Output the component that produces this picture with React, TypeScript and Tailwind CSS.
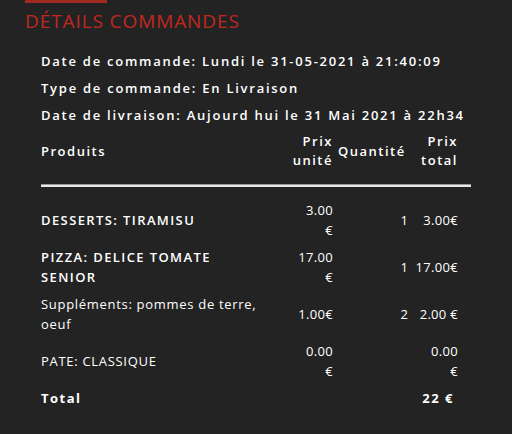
const rows = [
  { name: "DESSERTS: TIRAMISU", strong: true, unit: ["3.00", "€"], qty: "1", total: ["3.00€"] },
  { name: "PIZZA: DELICE TOMATE SENIOR", strong: true, unit: ["17.00", "€"], qty: "1", total: ["17.00€"] },
  { name: "Suppléments: pommes de terre, oeuf", strong: false, unit: ["1.00€"], qty: "2", total: ["2.00 €"] },
  { name: "PATE: CLASSIQUE", strong: false, unit: ["0.00", "€"], qty: "", total: ["0.00", "€"] },
];

export default function App() {
  return (
    <div
      className="h-[434px] w-[512px] overflow-hidden bg-[#232323] text-white"
      style={{ fontFamily: '"Open Sans", "Noto Sans", sans-serif' }}
    >
      <div className="ml-[25px] h-[3px] w-[82px] bg-[#9e2a22]" />
      <h1 className="ml-[25px] mt-[8px] text-[19px] font-medium leading-[20px] tracking-[0.9px] text-[#c0281f]">
        DÉTAILS COMMANDES
      </h1>
      <div className="mt-[20px] flex flex-col gap-[7px] pl-[41px] text-[13px] font-semibold leading-[20px] tracking-[1.75px]">
        <div>Date de commande: Lundi le 31-05-2021 à 21:40:09</div>
        <div>Type de commande: En Livraison</div>
        <div>Date de livraison: Aujourd hui le 31 Mai 2021 à 22h34</div>
      </div>
      <div className="ml-[41px] mt-[7px] w-[430px]">
        <div className="grid grid-cols-[250px_42px_79px_46px] text-[13px] font-semibold leading-[19px] tracking-[1.5px]">
          <div className="self-center">Produits</div>
          <div className="text-right">
            Prix
            <br />
            unité
          </div>
          <div className="self-center pl-[5px]">Quantité</div>
          <div className="text-right">
            Prix
            <br />
            total
          </div>
        </div>
        <div className="mt-[14px] h-[3px] border-t border-[#9a9a9a] bg-[#e8e8e8]" />
        <div className="mt-[13px] flex flex-col gap-[7px] text-[13px] leading-[20px]">
          {rows.map((r) => (
            <div key={r.name} className="grid h-[40px] grid-cols-[250px_42px_79px_46px] items-center">
              <div className={r.strong ? "pr-[40px] font-semibold tracking-[1.4px]" : "pr-[20px] tracking-[0.7px]"}>
                {r.name}
              </div>
              <div className="text-right tracking-[0.3px]">
                {r.unit.map((u) => (
                  <div key={u}>{u}</div>
                ))}
              </div>
              <div className="pr-[4px] text-right">{r.qty}</div>
              <div className="text-right tracking-[0.3px]">
                {r.total.map((t) => (
                  <div key={t}>{t}</div>
                ))}
              </div>
            </div>
          ))}
          <div className="grid h-[20px] grid-cols-[250px_42px_79px_46px] items-center font-bold tracking-[1.5px]">
            <div>Total</div>
            <div />
            <div />
            <div className="pr-[4px] text-right">22 €</div>
          </div>
        </div>
      </div>
    </div>
  );
}
